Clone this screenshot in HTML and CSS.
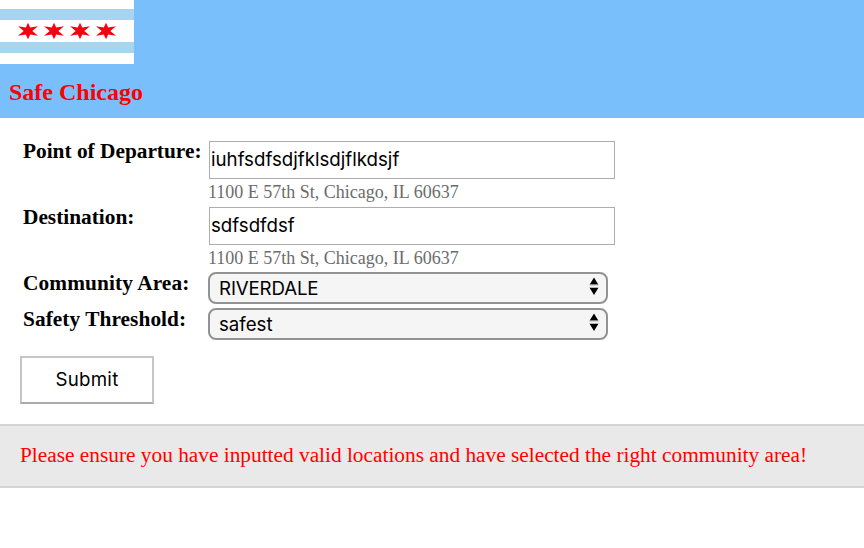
FILE: index.html
```html
<!DOCTYPE html>
<html lang="en">
<head>
<meta charset="utf-8">
<title>Safe Chicago</title>
<link rel="stylesheet" href="styles.css">
</head>
<body>
<header class="header">
  <svg class="flag" viewBox="0 0 134 64" aria-hidden="true">
    <defs><path id="star" d="M0-8.300 2.200-3.500 10-4.700 4.300 0 10 4.700 2.200 3.500 0 8.300-2.200 3.500-10 4.700-4.300 0-10-4.700-2.200-3.500Z"/></defs>
    <path fill="#fff" d="M0 0h134v64H0z"/>
    <path fill="#a6d5ef" d="M0 9h134v11H0zM0 42h134v11H0z"/>
    <g fill="#f80010">
      <use href="#star" x="28" y="31"/><use href="#star" x="54" y="31"/><use href="#star" x="80" y="31"/><use href="#star" x="106" y="31"/>
    </g>
  </svg>
  <h1 class="title">Safe Chicago</h1>
</header>
<form class="form">
  <div class="row row-text">
    <label class="label" for="from">Point of Departure:</label>
    <div class="field">
      <input class="input" id="from" type="text" value="iuhfsdfsdjfklsdjflkdsjf" spellcheck="false">
      <span class="hint">1100 E 57th St, Chicago, IL 60637</span>
    </div>
  </div>
  <div class="row row-text">
    <label class="label" for="to">Destination:</label>
    <div class="field">
      <input class="input" id="to" type="text" value="sdfsdfdsf" spellcheck="false">
      <span class="hint">1100 E 57th St, Chicago, IL 60637</span>
    </div>
  </div>
  <div class="row row-select">
    <label class="label area" for="area">Community Area:</label>
    <div class="select-wrap">
      <select class="select upper" id="area"><option>RIVERDALE</option></select>
      <svg class="arrows" viewBox="0 0 10 18" aria-hidden="true"><path d="M5 .5 9.300 7.500H.7zM5 18 .7 11h8.600z"/><path class="edge" d="M.5 8h9M.5 10.500h9"/></svg>
    </div>
  </div>
  <div class="row row-select">
    <label class="label threshold" for="safety">Safety Threshold:</label>
    <div class="select-wrap">
      <select class="select" id="safety"><option>safest</option></select>
      <svg class="arrows" viewBox="0 0 10 18" aria-hidden="true"><path d="M5 .5 9.300 7.500H.7zM5 18 .7 11h8.600z"/><path class="edge" d="M.5 8h9M.5 10.500h9"/></svg>
    </div>
  </div>
  <button class="submit" type="button">Submit</button>
</form>
<p class="message">Please ensure you have inputted valid locations and have selected the right community area!</p>
</body>
</html>
```

FILE: styles.css
```css
* { box-sizing: border-box; }
body { margin: 0; background: #fff; color: #000; font-family: "Liberation Serif", serif; }
.header { height: 118px; background: #78bffb; }
.flag { display: block; width: 134px; height: 64px; }
.title { margin: 14px 0 0 9px; color: #f00; font-size: 24px; line-height: 28px; }
.form { padding: 20px 20px 0; }
.row { display: grid; grid-template-columns: 185px 407px; padding-left: 3px; }
.row-text { height: 66px; }
.row-select { height: 36px; }
.label { font-size: 21.33px; font-weight: bold; line-height: 26px; white-space: nowrap; }
.area { letter-spacing: .1px; }
.threshold { letter-spacing: .06px; }
.field { padding-top: 3px; }
.input { display: block; width: 406px; height: 38px; margin: 0 0 0 1px; padding: 0 1px 1px; border: 1px solid #adadad; background: #fff; color: #000; font: 18.7px/35px Inter, sans-serif; outline: 0; }
.hint { display: block; color: #6c6c6c; font-size: 18px; line-height: 27px; }
.select-wrap { position: relative; width: 400px; height: 32px; margin-top: 2px; }
.select { appearance: none; display: block; width: 400px; height: 32px; padding: 1px 9px 0; border: 2px solid #929292; border-radius: 8px; background: #f5f5f5; color: #000; font: 18.7px/27px Inter, sans-serif; }
.upper { letter-spacing: -.15px; }
.arrows { position: absolute; right: 9px; top: 5px; width: 10px; height: 18px; }
.edge { fill: none; stroke: #999; stroke-width: .7; }
.submit { display: block; width: 134px; height: 48px; margin-top: 14px; padding: 0 0 2px; border: 2px solid #c6c6c6; border-bottom-color: #aaa; background: #fff; color: #000; font: 18.7px Inter, sans-serif; letter-spacing: .25px; }
.message { height: 64px; margin: 20px 0 0; padding: 0 20px; border: solid #d4d4d4; border-width: 2px 0; background: #e9e9e9; color: #f00; font-size: 21.33px; line-height: 58px; white-space: nowrap; }
```
